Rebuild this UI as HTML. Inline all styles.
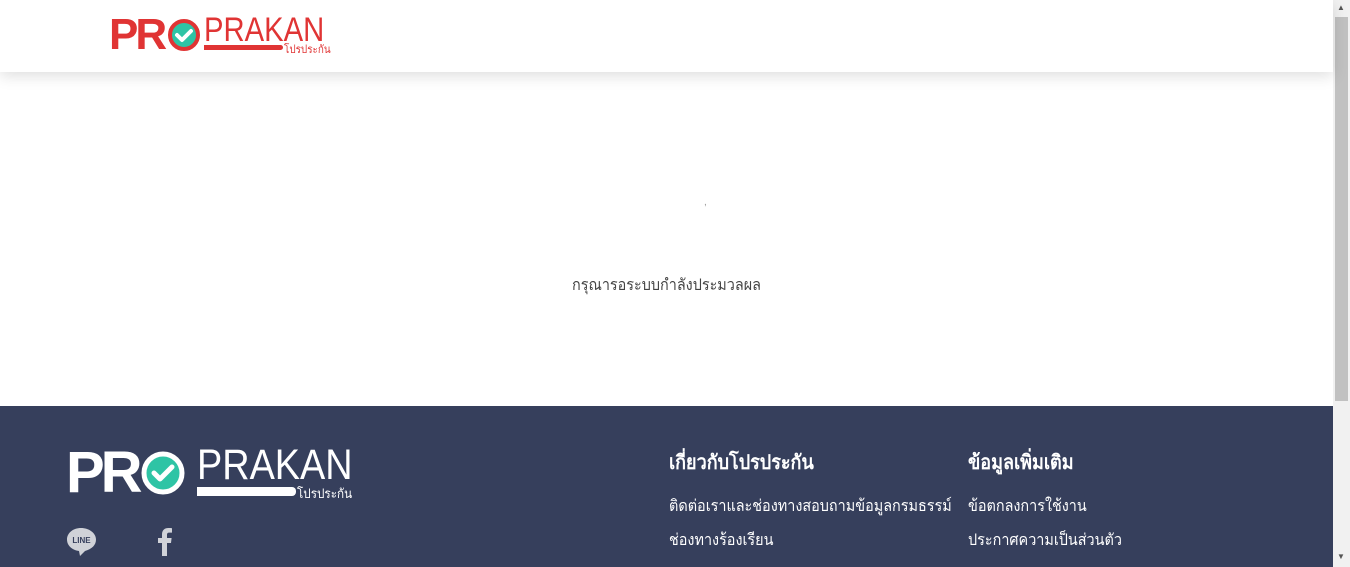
<!DOCTYPE html>
<html><head><meta charset="utf-8"><style>
*{margin:0;padding:0;box-sizing:border-box}
body{width:1350px;height:567px;overflow:hidden;background:#fff;font-family:"Liberation Sans","Noto Sans CJK SC",sans-serif;position:relative}
.hdr{position:absolute;left:0;top:0;width:1333px;height:72px;background:#fff;box-shadow:0 4px 14px rgba(0,0,0,.13);z-index:2}
.abs{position:absolute;white-space:nowrap}
.foot{position:absolute;left:0;top:406px;width:1333px;height:161px;background:#363f5c}
.sb{position:absolute;right:0;top:0;width:17px;height:567px;background:#f1f1f1}
.sb .th{position:absolute;left:2px;top:17px;width:13px;height:384px;background:#c1c1c1}
.sx{transform:scaleX(.9);transform-origin:left}
.fl{color:#fff;font-size:16px}
.fh{color:#fff;font-size:20px;font-weight:bold}
</style></head><body>
<div class="hdr">
 <div class="abs" style="left:109px;top:10px;font-size:44px;font-weight:bold;color:#e03434;letter-spacing:-3px">PR</div>
 <svg class="abs" style="left:167px;top:18px" width="34" height="34" viewBox="0 0 34 34"><circle cx="17" cy="17" r="14" fill="#2ec4a5" stroke="#e03434" stroke-width="4"/><path d="M10 17l5 5 9-9" fill="none" stroke="#fff" stroke-width="4" stroke-linecap="round" stroke-linejoin="round"/></svg>
 <div class="abs" style="left:204px;top:11px;font-size:34px;color:#e03434;transform:scaleX(.86);transform-origin:left">PRAKAN</div>
 <div class="abs" style="left:204px;top:45px;width:79px;height:5px;background:#e03434;border-radius:0 3px 3px 0"></div>
 <div class="abs sx" style="left:284px;top:40px;font-size:11px;color:#e03434">โปรประกัน</div>
</div>
<div class="abs" style="left:704px;top:197px;font-size:10px;color:#999">,</div>
<div class="abs sx" style="left:572px;top:273px;font-size:16px;color:#444">กรุณารอระบบกำลังประมวลผล</div>
<div class="foot">
 <div class="abs" style="left:66px;top:33px;font-size:58px;font-weight:bold;color:#fff;letter-spacing:-4px">PR</div>
 <svg class="abs" style="left:140px;top:44px" width="46" height="46" viewBox="0 0 46 46"><circle cx="23" cy="23" r="19" fill="#2ec4a5" stroke="#fff" stroke-width="5"/><path d="M14 23l6 6 12-12" fill="none" stroke="#fff" stroke-width="5" stroke-linecap="round" stroke-linejoin="round"/></svg>
 <div class="abs" style="left:197px;top:35px;font-size:43px;color:#fff;transform:scaleX(.88);transform-origin:left">PRAKAN</div>
 <div class="abs" style="left:197px;top:81px;width:99px;height:9px;background:#fff;border-radius:0 4px 4px 0"></div>
 <div class="abs sx" style="left:297px;top:77px;font-size:13px;color:#fff">โปรประกัน</div>
 <svg class="abs" style="left:66px;top:121px" width="31" height="30" viewBox="0 0 31 30"><path d="M15 1C7 1 1 6 1 12.5c0 6 5 10.5 12 11.5l1 5 5-5c7-2 11-6 11-11.5C30 6 23 1 15 1z" fill="#d0d2d8"/><text x="15.5" y="16" font-size="8" font-weight="bold" fill="#363f5c" text-anchor="middle" font-family="Liberation Sans">LINE</text></svg>
 <svg class="abs" style="left:157px;top:121px" width="16" height="30" viewBox="0 0 16 30"><path d="M10 29V16h4l.6-5H10V8c0-1.4.4-2.4 2.4-2.4H15V1.2C14.5 1.1 13 1 11.3 1 7.7 1 5 3.2 5 7.3V11H1v5h4v13z" fill="#d0d2d8"/></svg>
 <div class="abs fh sx" style="left:669px;top:40px">เกี่ยวกับโปรประกัน</div>
 <div class="abs fl sx" style="left:669px;top:88px">ติดต่อเราและช่องทางสอบถามข้อมูลกรมธรรม์</div>
 <div class="abs fl sx" style="left:669px;top:122px">ช่องทางร้องเรียน</div>
 <div class="abs fh sx" style="left:968px;top:40px">ข้อมูลเพิ่มเติม</div>
 <div class="abs fl sx" style="left:968px;top:88px">ข้อตกลงการใช้งาน</div>
 <div class="abs fl sx" style="left:968px;top:122px">ประกาศความเป็นส่วนตัว</div>
</div>
<div class="sb"><div class="th"></div>
 <div class="abs" style="left:4px;top:3px;font-size:8px;color:#555">▲</div>
 <div class="abs" style="left:4px;top:552px;font-size:8px;color:#555">▼</div>
</div>
</body></html>
